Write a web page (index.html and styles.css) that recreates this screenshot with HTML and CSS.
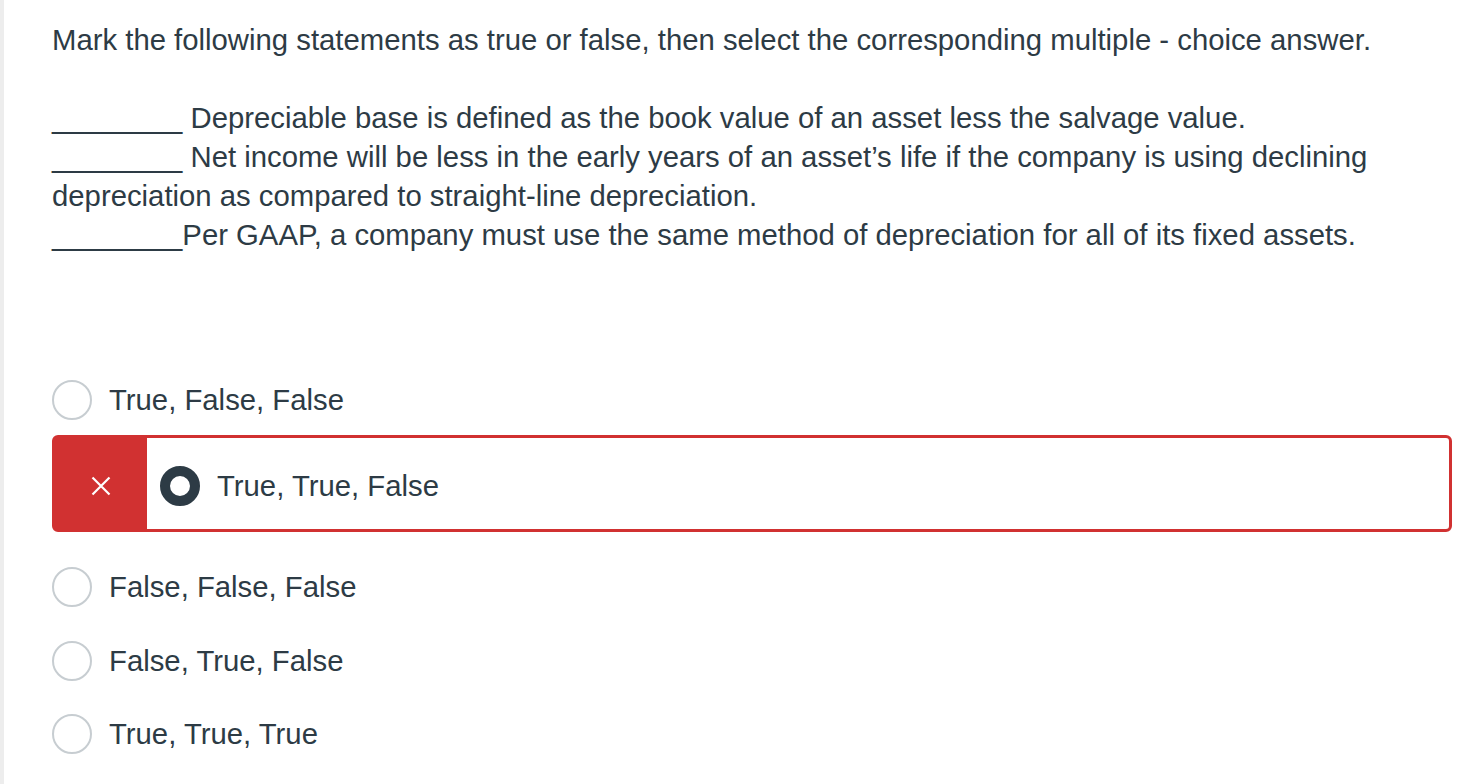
FILE: index.html
```html
<!DOCTYPE html>
<html lang="en">
<head>
<meta charset="utf-8">
<title>Quiz question</title>
<link rel="stylesheet" href="styles.css">
</head>
<body>
<div class="page">
  <p class="question">Mark the following statements as true or false, then select the corresponding multiple - choice answer.<br><br>________ Depreciable base is defined as the book value of an asset less the salvage value.<br>________ Net income will be less in the early years of an asset’s life if the company is using declining<br>depreciation as compared to straight-line depreciation.<br>________Per GAAP, a company must use the same method of depreciation for all of its fixed assets.</p>

  <div class="answers">
    <div class="answer a1"><span class="radio"></span><span class="label">True, False, False</span></div>
    <div class="answer-wrong">
      <div class="flag">
        <svg width="20" height="20" viewBox="0 0 20 20" aria-hidden="true"><path d="M1.5 1.5 L18.5 18.5 M18.5 1.5 L1.5 18.5" stroke="#ffffff" stroke-width="2.2" fill="none"/></svg>
      </div>
      <div class="wrong-body"><span class="radio-checked"></span><span class="label">True, True, False</span></div>
    </div>
    <div class="answer a3"><span class="radio"></span><span class="label">False, False, False</span></div>
    <div class="answer a4"><span class="radio"></span><span class="label">False, True, False</span></div>
    <div class="answer a5"><span class="radio"></span><span class="label">True, True, True</span></div>
  </div>
</div>
</body>
</html>
```

FILE: styles.css
```css
html, body {
  margin: 0;
  padding: 0;
  background: #ffffff;
}

body {
  font-family: "Liberation Sans", Arial, Helvetica, sans-serif;
  color: #2d3b45;
}

.page {
  border-left: 4px solid #ededed;
  min-height: 784px;
  box-sizing: border-box;
  padding: 20px 12px 0 48px;
}

.question {
  margin: 0;
  font-size: 29.3px;
  line-height: 39px;
}

.answers {
  margin-top: 122px;
  display: flex;
  flex-direction: column;
}

.answer {
  display: flex;
  align-items: center;
  height: 48px;
}

.a3 { margin-top: 31px; }
.a4 { margin-top: 26px; }
.a5 { margin-top: 25px; }

.radio {
  width: 40px;
  height: 40px;
  box-sizing: border-box;
  border: 2px solid #c7cdd1;
  border-radius: 50%;
  background: #ffffff;
  margin-right: 17px;
  flex: none;
}

.label {
  font-size: 29.3px;
  line-height: 34px;
}

.answer-wrong {
  margin-top: 11px;
  height: 97px;
  box-sizing: border-box;
  border: 3px solid #d13131;
  border-radius: 6px;
  display: flex;
}

.flag {
  width: 92px;
  flex: none;
  background: #d13131;
  display: flex;
  align-items: center;
  justify-content: center;
  padding-top: 4px;
  box-sizing: border-box;
}

.flag svg {
  display: block;
}

.wrong-body {
  display: flex;
  align-items: center;
  padding-top: 4px;
}

.radio-checked {
  width: 40px;
  height: 40px;
  box-sizing: border-box;
  border: 10px solid #2d3b45;
  border-radius: 50%;
  background: #ffffff;
  margin-left: 13px;
  margin-right: 17px;
  flex: none;
}
```
